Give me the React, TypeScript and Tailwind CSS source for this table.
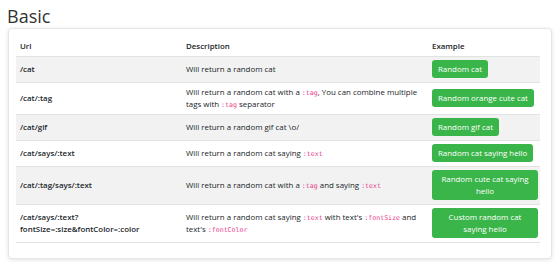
import React from "react";

const Code = ({ children }: { children: React.ReactNode }) => (
  <code className="text-[#e83e8c] text-[6.6px] leading-none align-baseline [font-family:'DejaVu_Sans_Mono',monospace]">{children}</code>
);

type Row = { url: React.ReactNode; desc: React.ReactNode; btn: string };

const rows: Row[] = [
  { url: "/cat", desc: "Will return a random cat", btn: "Random cat" },
  {
    url: "/cat/:tag",
    desc: (
      <>
        Will return a random cat with a <Code>:tag</Code>, You can combine multiple tags with <Code>:tag</Code> separator
      </>
    ),
    btn: "Random orange cute cat",
  },
  { url: "/cat/gif", desc: "Will return a random gif cat \\o/", btn: "Random gif cat" },
  {
    url: "/cat/says/:text",
    desc: (
      <>
        Will return a random cat saying <Code>:text</Code>
      </>
    ),
    btn: "Random cat saying hello",
  },
  {
    url: "/cat/:tag/says/:text",
    desc: (
      <>
        Will return a random cat with a <Code>:tag</Code> and saying <Code>:text</Code>
      </>
    ),
    btn: "Random cute cat saying hello",
  },
  {
    url: (
      <>
        /cat/says/:text?
        <br />
        fontSize=:size&amp;fontColor=:color
      </>
    ),
    desc: (
      <>
        Will return a random cat saying <Code>:text</Code> with text's <Code>:fontSize</Code> and text's{" "}
        <Code>:fontColor</Code>
      </>
    ),
    btn: "Custom random cat saying hello",
  },
];

export default function App() {
  return (
    <div className="w-[560px] h-[270px] bg-white [font-family:'Open_Sans',sans-serif] text-[#212529] overflow-hidden">
      <h1 className="pl-[7px] pt-[4px] text-[18px] leading-[24px] text-[#333] font-normal">Basic</h1>
      <div className="mx-[8px] bg-white rounded-[4px] border border-[#e6e6e6] shadow-[0_1px_4px_rgba(0,0,0,0.12)] pt-[7px] px-[7px] pb-[15px]">
        <table className="w-[524px] table-fixed border-collapse text-[7.9px] leading-[12px]">
          <colgroup>
            <col className="w-[166px]" />
            <col className="w-[244px]" />
            <col className="w-[114px]" />
          </colgroup>
          <thead>
            <tr>
              <th className="text-left font-semibold px-[4px] h-[20px] align-middle">Url</th>
              <th className="text-left font-semibold px-[4px] h-[20px] align-middle">Description</th>
              <th className="text-left font-semibold pl-[6px] pr-[2px] h-[20px] align-middle">Example</th>
            </tr>
          </thead>
          <tbody>
            {rows.map((r, i) => (
              <tr
                key={i}
                className={`border-t border-[#e3e3e3] ${i % 2 === 0 ? "bg-[#f2f2f2]" : "bg-white"} ${i === rows.length - 1 ? "border-b" : ""}`}
              >
                <td className="px-[4px] py-[3.5px] align-middle font-semibold">{r.url}</td>
                <td className="pl-[4px] pr-[1px] py-[3.5px] align-middle">{r.desc}</td>
                <td className="pl-[6px] pr-[2px] py-[3.5px] align-middle">
                  <span className="inline-block max-w-[106px] rounded-[3px] bg-[#3ab54a] text-white text-center px-[6px] py-[3px] leading-[12px]">
                    {r.btn}
                  </span>
                </td>
              </tr>
            ))}
          </tbody>
        </table>
      </div>
    </div>
  );
}
